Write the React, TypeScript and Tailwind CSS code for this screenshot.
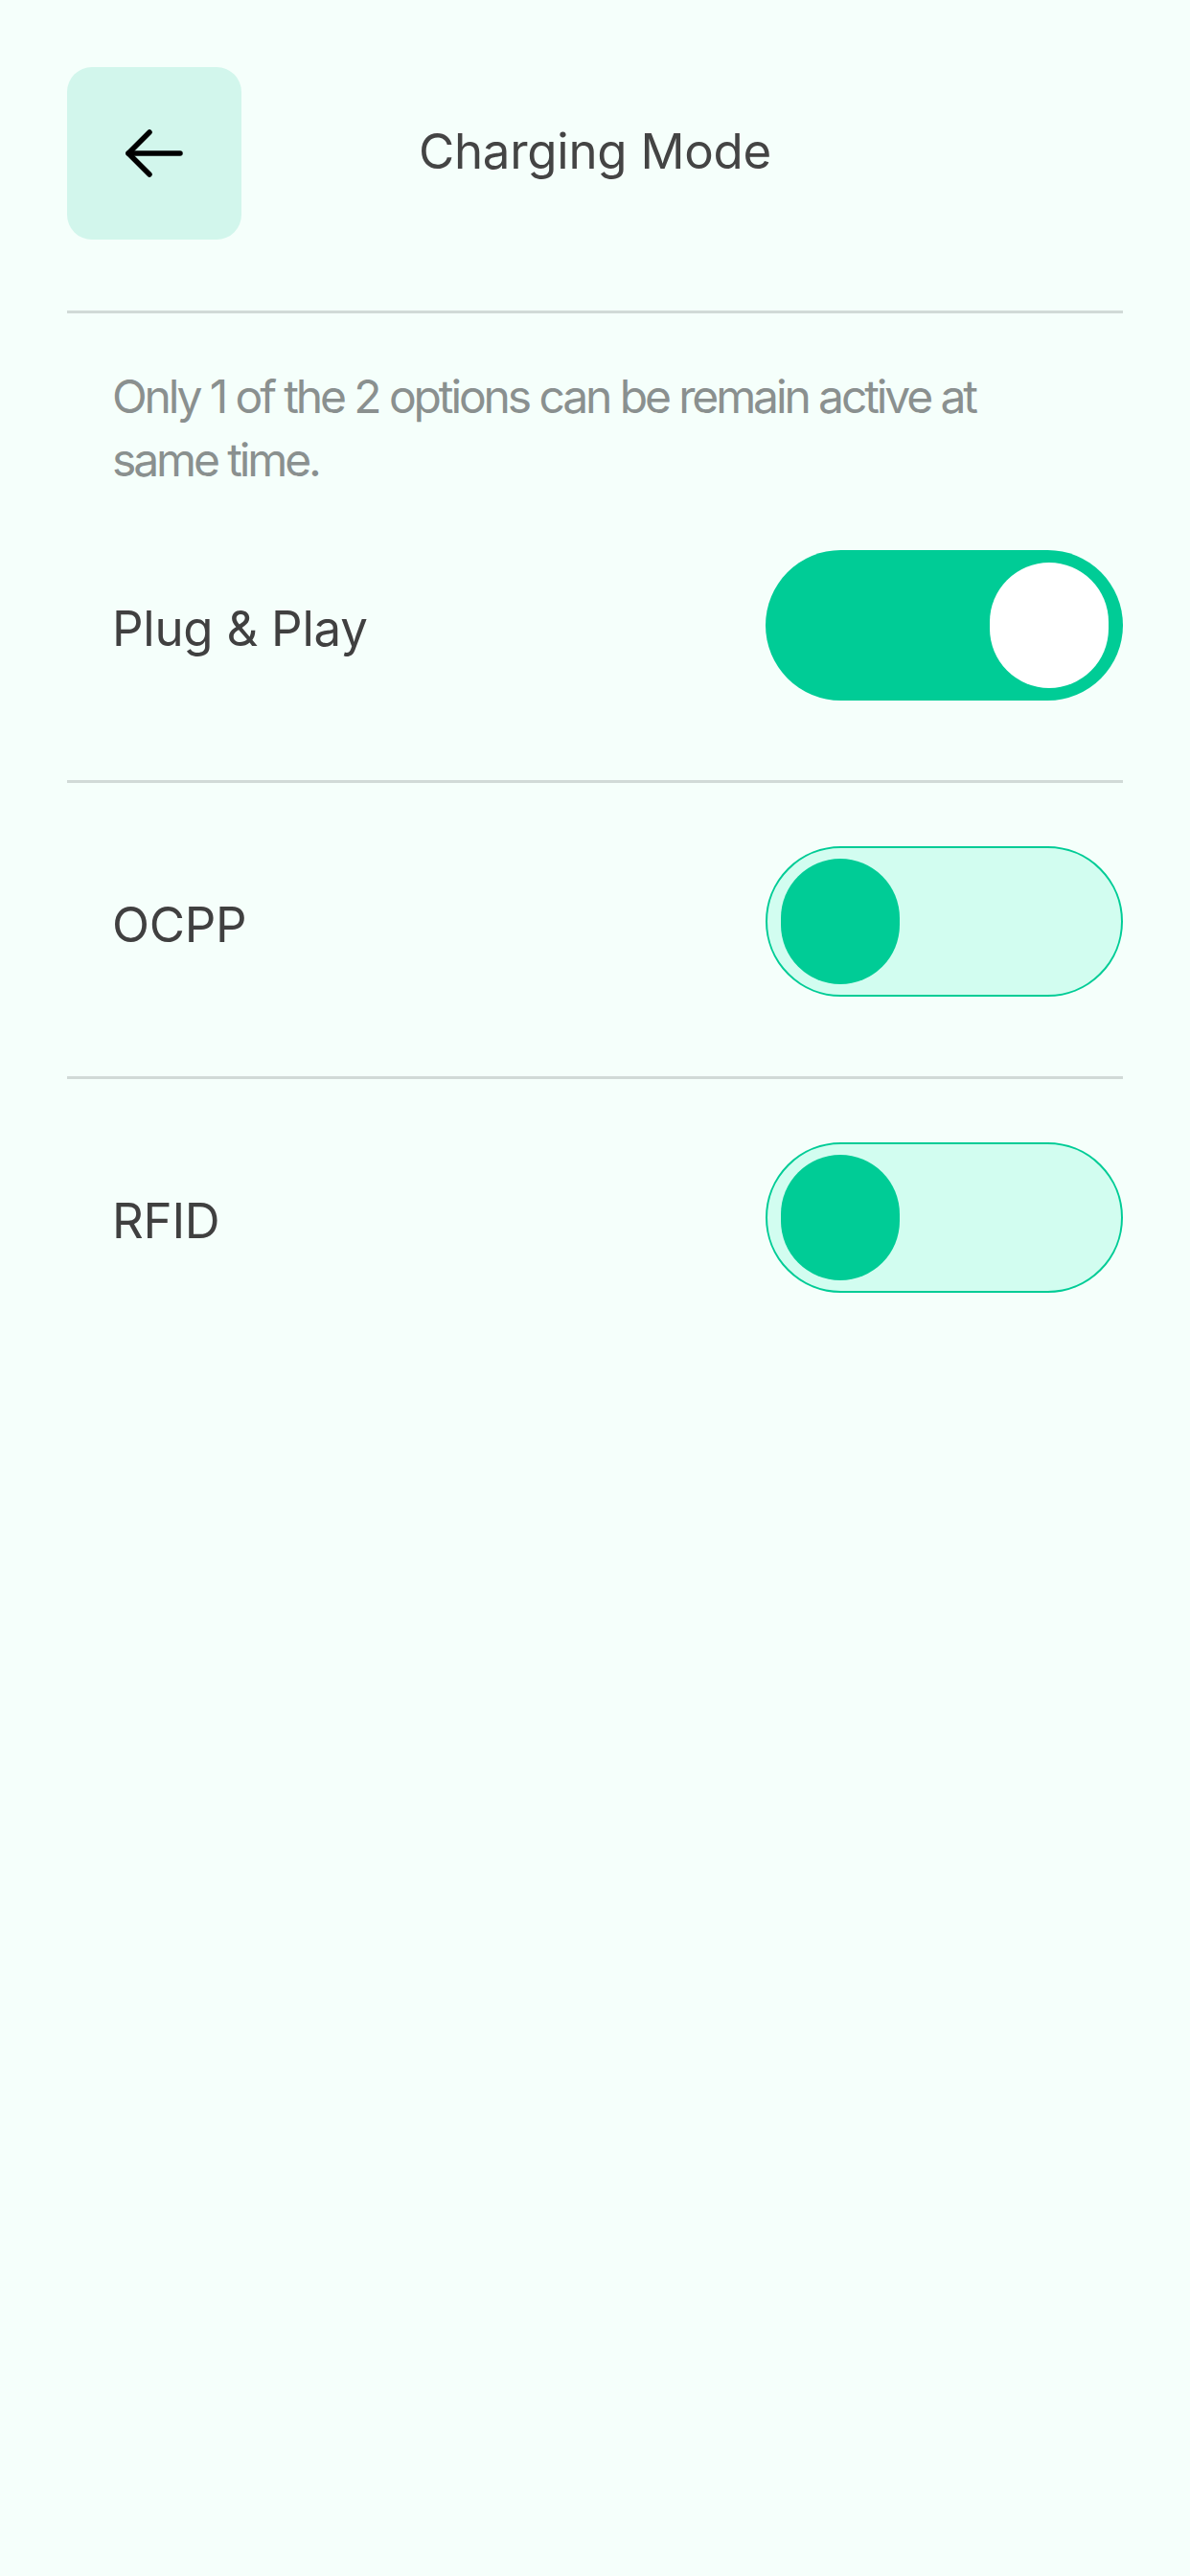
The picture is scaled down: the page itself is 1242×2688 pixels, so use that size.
import React, { useState } from 'react';

type Mode = 'plug' | 'ocpp' | 'rfid';

const modes: { id: Mode; label: string }[] = [
  { id: 'plug', label: 'Plug & Play' },
  { id: 'ocpp', label: 'OCPP' },
  { id: 'rfid', label: 'RFID' },
];

const Toggle: React.FC<{ on: boolean; onClick: () => void }> = ({ on, onClick }) => (
  <button
    type="button"
    onClick={onClick}
    className={`flex w-[373px] h-[157px] shrink-0 items-center rounded-full ${
      on ? 'bg-[#00cc96] justify-end pr-[15px]' : 'bg-[#d2fdf0] border-2 border-[#00cc96] justify-start pl-[14px]'
    }`}
  >
    <span className={`block w-[124px] h-[131px] rounded-full ${on ? 'bg-white' : 'bg-[#00cc96]'}`} />
  </button>
);

const App: React.FC = () => {
  const [active, setActive] = useState<Mode>('plug');

  return (
    <div className="min-h-screen w-full bg-[#f5fffb] px-[70px] pt-[70px] font-['Inter',sans-serif]">
      {/* Header */}
      <div className="flex items-center">
        <button
          type="button"
          className="flex w-[182px] h-[180px] shrink-0 items-center justify-center rounded-[26px] bg-[#d2f6ec]"
        >
          <svg width="62" height="52" viewBox="0 0 62 52" fill="none" stroke="#000" strokeWidth="5.5" strokeLinecap="round" strokeLinejoin="round">
            <path d="M26 4 4 26l22 22" />
            <path d="M4 26h54" />
          </svg>
        </button>
        <h1 className="flex-1 mb-[6px] text-center text-[51px] leading-none font-normal tracking-[-0.005em] text-[#444444]">Charging Mode</h1>
        <div className="w-[182px] shrink-0" />
      </div>

      <div className="mt-[74px] h-[3px] bg-[#d1dad7]" />

      {/* Hint */}
      <p className="mt-[54px] pl-[47px] pr-[105px] text-[48px] leading-[66px] tracking-[-0.065em] text-[#8a908f]">
        Only 1 of the 2 options can be remain active at same time.
      </p>

      {modes.map((m, i) => (
        <div key={m.id}>
          <div className={`flex items-center justify-between pl-[47px] ${i === 0 ? 'pt-[61px]' : 'pt-[66px]'} pb-[83px]`}>
            <span className="mt-[6px] text-[51px] leading-none tracking-[-0.005em] text-[#404040]">{m.label}</span>
            <Toggle on={active === m.id} onClick={() => setActive(m.id)} />
          </div>
          {i < modes.length - 1 && <div className="h-[3px] bg-[#d1dad7]" />}
        </div>
      ))}
    </div>
  );
};

export default App;
